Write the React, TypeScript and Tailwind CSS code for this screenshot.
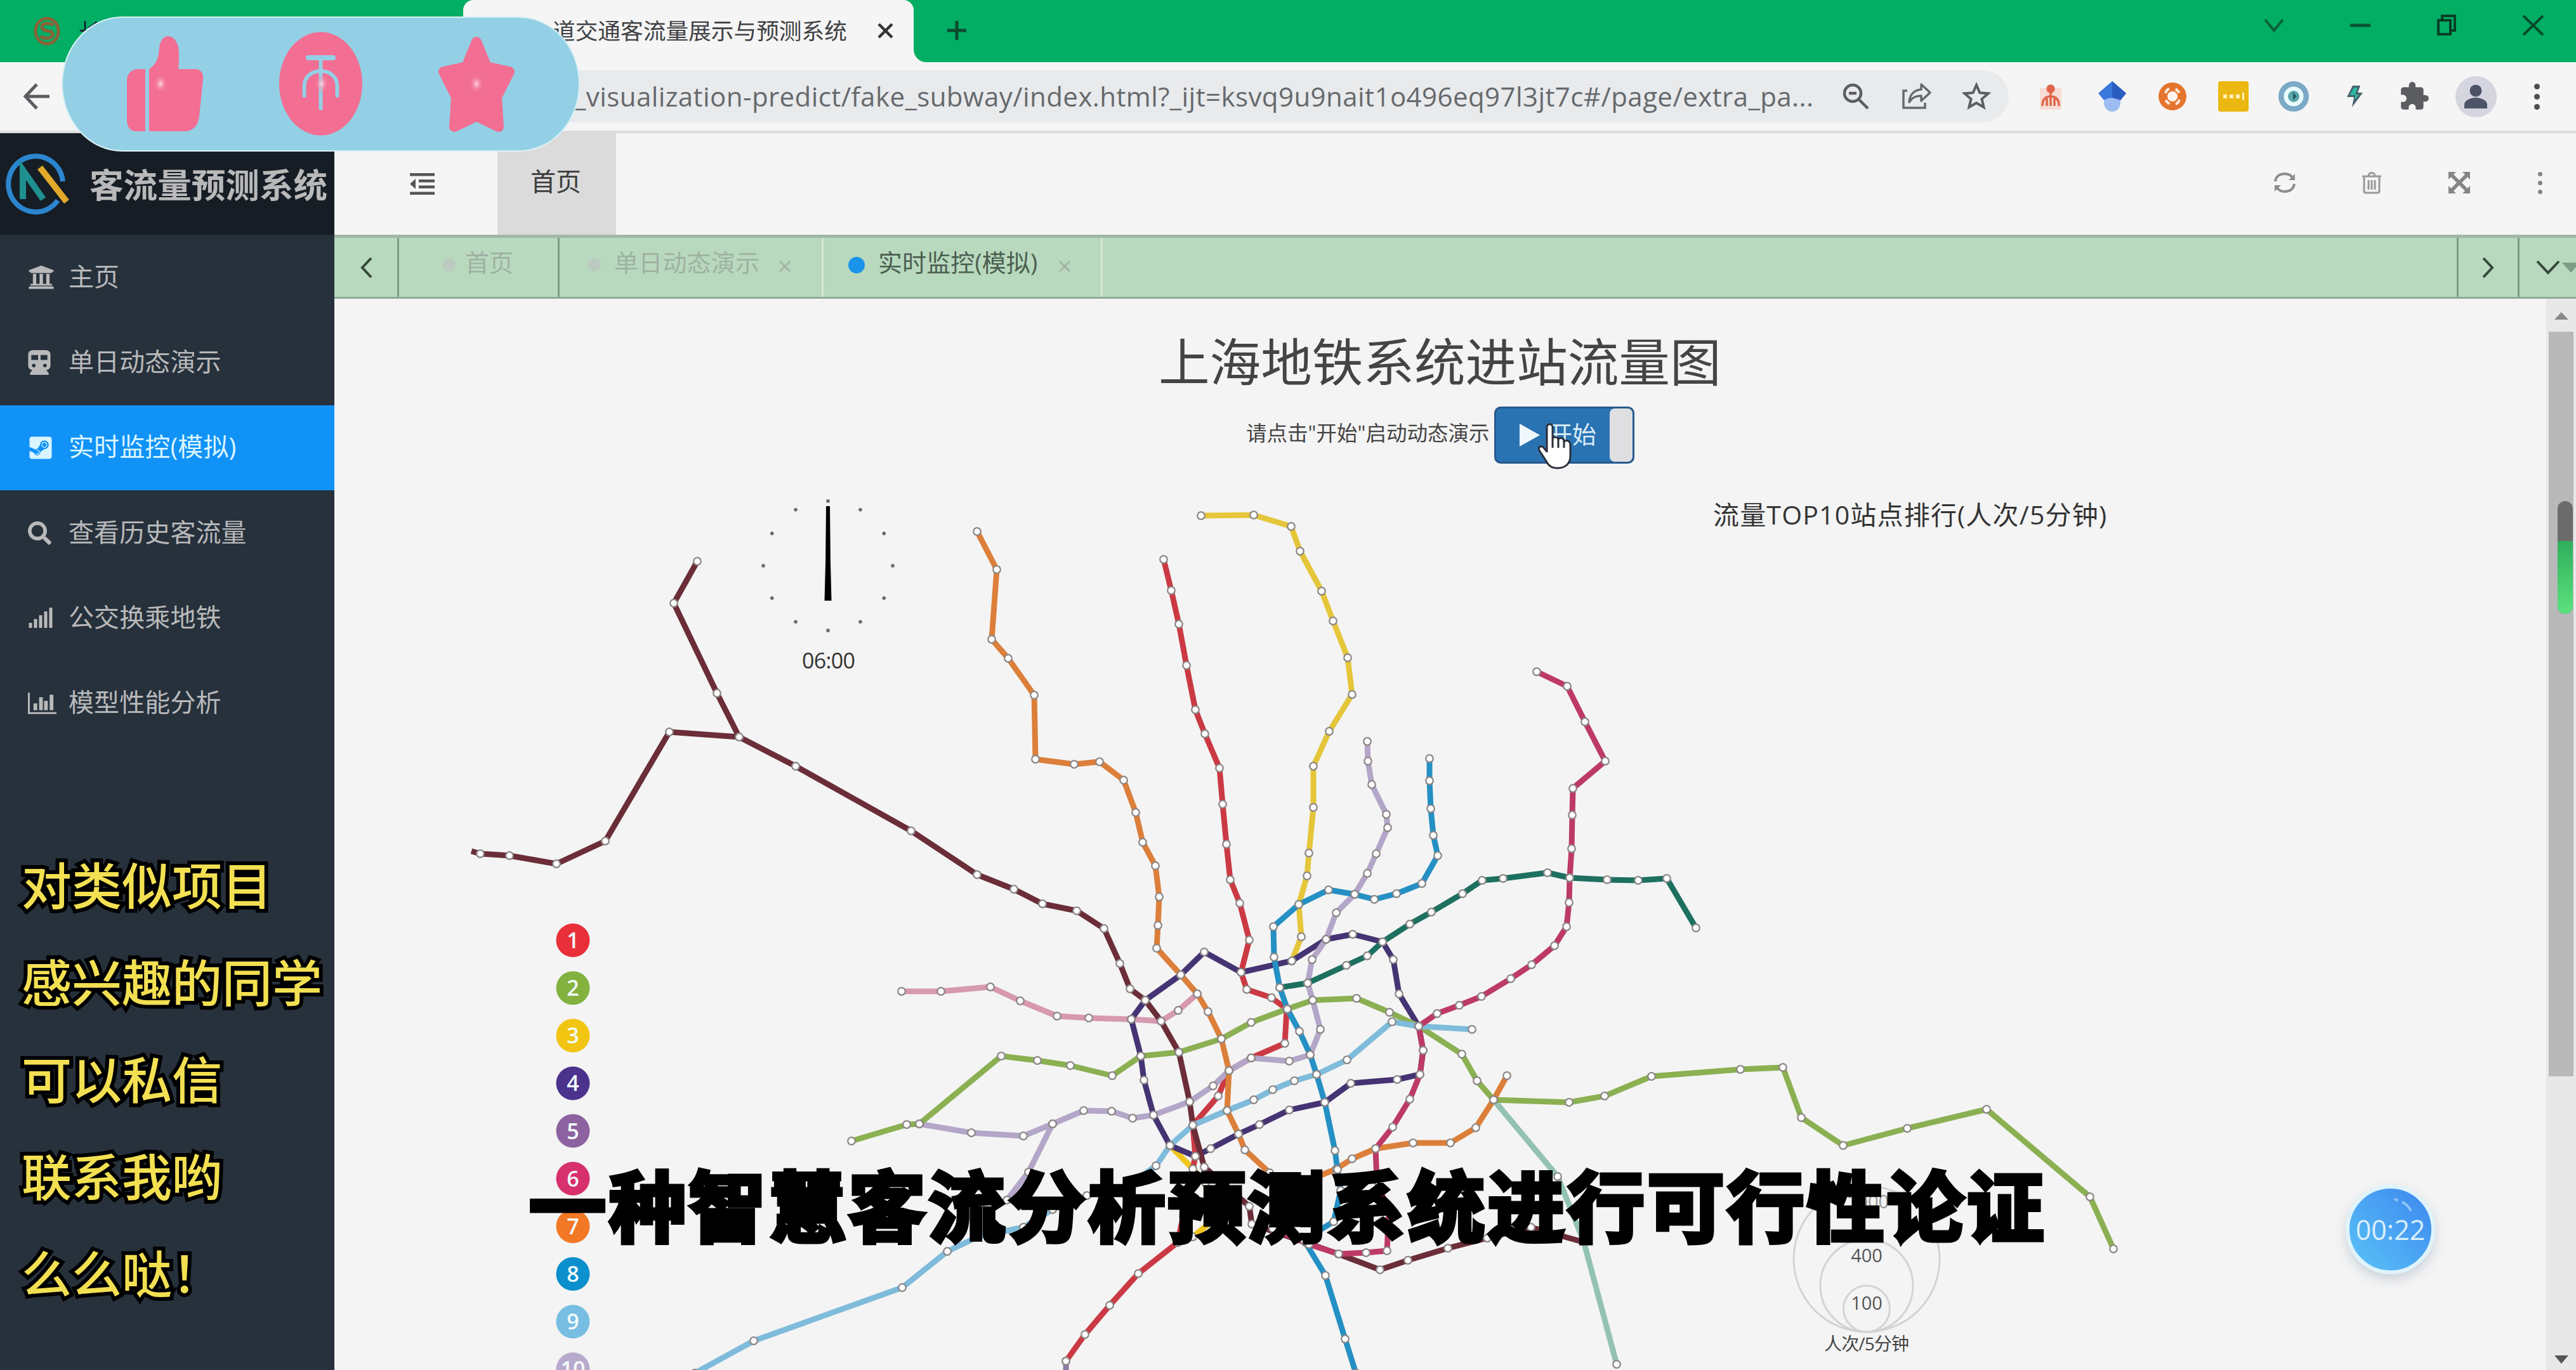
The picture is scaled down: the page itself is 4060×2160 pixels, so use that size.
import React from "react";
import { FaUniversity, FaSteamSquare, FaSearch, FaSignal } from "react-icons/fa";
import { MdExtension } from "react-icons/md";

type Line = { id: string; color: string; points: string; hideFirst?: boolean; hideLast?: boolean };

const LINES: Line[] = [
  {
    id: "16",
    color: "#93c2b3",
    points: "2354,1734 2455,1855 2496,1957 2548,2151",
  },
  {
    id: "5",
    color: "#8d7aa5",
    points: "1680,2146 1680,2175",
  },
  {
    id: "13",
    color: "#d799b0",
    points:
      "1421,1563 1483,1563 1561,1556 1608,1578 1666,1602 1716,1605 1783,1607 1830,1610 1857,1593 1887,1567",
  },
  {
    id: "3",
    color: "#e5c63a",
    points:
      "1893,813 1976,812 2035,830 2049,869 2083,932 2101,979 2124,1037 2131,1095 2095,1153 2070,1208 2070,1273 2063,1345 2060,1381 2047,1426 2051,1477 2036,1515",
  },
  {
    id: "3s",
    color: "#f0c51d",
    points: "1844,1806 1880,1843 1900,1865 1908,1927 1880,1950 1856,1959",
  },
  {
    id: "4",
    color: "#453473",
    points:
      "1805,1577 1861,1537 1898,1501 1956,1533 2036,1515 2090,1481 2132,1473 2179,1485 2196,1513 2205,1567 2236,1618 2243,1656 2238,1694 2202,1702 2129,1708 2088,1738 2032,1750 1985,1773 1952,1788 1908,1811 1884,1823 1844,1806 1818,1758 1803,1703 1798,1665 1783,1607 1805,1577",
  },
  {
    id: "1",
    color: "#cb3a44",
    points:
      "1834,882 1846,931 1858,984 1870,1049 1884,1119 1899,1157 1922,1211 1927,1268 1933,1331 1939,1387 1954,1424 1969,1482 1956,1533 1965,1560 2004,1573 2028,1591 2025,1645 1972,1668 1937,1688 1920,1728 1880,1774 1884,1823 1865,1917 1856,1959 1794,2008 1749,2058 1710,2104 1680,2146",
  },
  {
    id: "10",
    color: "#b3a6c8",
    points:
      "2155,1169 2156,1200 2162,1237 2185,1284 2187,1305 2169,1346 2155,1377 2135,1410 2106,1439 2090,1481 2068,1513 2061,1550 2069,1577 2081,1623 2065,1663 2032,1673 1972,1668 1937,1688 1912,1712 1875,1737 1818,1758 1785,1763 1752,1752 1708,1751 1659,1772 1613,1791 1531,1786 1449,1772",
  },
  {
    id: "10b",
    color: "#b3a6c8",
    points: "1659,1772 1621,1848 1587,1892",
  },
  {
    id: "2",
    color: "#8bb052",
    points:
      "1342,1799 1429,1773 1449,1772 1578,1665 1635,1672 1687,1680 1753,1696 1798,1665 1858,1659 1925,1638 1972,1612 2028,1591 2069,1577 2138,1574 2190,1596 2236,1618 2304,1662 2328,1704 2354,1734 2473,1738 2529,1728 2603,1697 2743,1686 2810,1683 2839,1762 2905,1806 3006,1779 3131,1749 3294,1887 3331,1969",
  },
  {
    id: "9",
    color: "#7fbbdb",
    points:
      "2320,1623 2236,1618 2194,1611 2123,1671 2075,1694 2040,1704 2006,1718 1976,1734 1934,1751 1880,1774 1844,1806 1822,1838 1776,1870 1713,1885 1659,1907 1613,1935 1541,1950 1493,1973 1422,2030 1188,2114 1095,2165",
  },
  {
    id: "11n",
    color: "#6b2d38",
    points: "1099,885 1062,951 1130,1093 1165,1162",
  },
  {
    id: "11",
    color: "#6b2d38",
    hideFirst: true,
    hideLast: true,
    points:
      "743,1342 757,1346 803,1349 877,1362 954,1326 1055,1154 1165,1162 1254,1208 1436,1310 1540,1379 1598,1402 1643,1425 1697,1436 1740,1464 1765,1519 1781,1559 1805,1577 1830,1610 1858,1659 1875,1737 1880,1774 1898,1840 1969,1902 1973,1930 2058,1959 2109,1977 2175,2002 2219,1987 2282,1968 2344,1952 2413,1935 2491,1957",
  },
  {
    id: "7",
    color: "#dc7f3a",
    points:
      "1540,838 1571,898 1563,1008 1589,1038 1630,1096 1632,1197 1693,1205 1733,1201 1771,1230 1790,1281 1801,1328 1821,1365 1827,1414 1825,1459 1823,1495 1861,1537 1887,1567 1904,1595 1925,1638 1937,1688 1934,1751 1952,1788 1962,1813 2001,1849 2040,1870 2106,1843 2131,1827 2168,1811 2227,1802 2286,1802 2326,1778 2354,1734 2375,1696",
  },
  {
    id: "12",
    color: "#1d7060",
    points:
      "2673,1463 2627,1385 2582,1388 2533,1387 2474,1384 2439,1376 2369,1385 2336,1388 2305,1409 2256,1438 2222,1457 2179,1485 2155,1507 2122,1522 2061,1550 2017,1557",
  },
  {
    id: "6",
    color: "#bd3a67",
    points:
      "2422,1059 2470,1082 2498,1138 2530,1200 2479,1243 2478,1285 2477,1338 2474,1384 2473,1423 2469,1461 2450,1491 2414,1521 2381,1543 2335,1571 2300,1585 2265,1598 2236,1618 2243,1656 2238,1694 2222,1733 2195,1777 2168,1811 2170,1862 2189,1912 2186,1972 2153,1975 2110,1977 2063,1962 2006,1937",
  },
  {
    id: "8",
    color: "#2590c4",
    points:
      "2253,1196 2253,1231 2255,1275 2259,1317 2266,1349 2241,1393 2201,1409 2166,1418 2135,1410 2094,1403 2047,1426 2007,1461 2008,1509 2017,1557 2029,1591 2048,1626 2065,1663 2075,1694 2088,1738 2104,1814 2108,1844 2113,1877 2102,1926 2055,1955 2089,2011 2120,2111 2137,2165",
  },
];

const BADGES = [
  "#e93039",
  "#83b23f",
  "#f2c512",
  "#4b328c",
  "#8d62a0",
  "#d6306d",
  "#f27825",
  "#0c8fcd",
  "#78bee2",
  "#b8aacd",
];

function SubwayMap() {
  return (
    <svg className="block h-[1420px] w-[3486px]" viewBox="527 740 3486 1420">
      {/* clock */}
      {Array.from({ length: 12 }, (_, i) => {
        const a = (i * Math.PI) / 6;
        return (
          <line
            key={i}
            x1={1305 + 99.5 * Math.sin(a)}
            y1={892 - 99.5 * Math.cos(a)}
            x2={1305 + 104.5 * Math.sin(a)}
            y2={892 - 104.5 * Math.cos(a)}
            stroke="#666"
            strokeWidth="5"
          />
        );
      })}
      <path d="M1302 798h6l1 94h-8z" fill="#000" />
      <path d="M1301 888h8l1.500 59h-11z" fill="#000" />
      <text x="1306" y="1054" textAnchor="middle" fontSize="34" fill="#333" textLength="84">
        06:00
      </text>

      <text x="2700" y="827" fontSize="41" fill="#333" textLength="620">
        流量TOP10站点排行(人次/5分钟)
      </text>

      {LINES.map((l) => (
        <polyline
          key={l.id}
          points={l.points}
          fill="none"
          stroke={l.color}
          strokeWidth="9"
          strokeLinejoin="round"
        />
      ))}
      {LINES.flatMap((l) => {
        const pts = l.points.split(" ");
        return pts
          .filter((_, i) => !(l.hideFirst && i === 0) && !(l.hideLast && i === pts.length - 1))
          .map((p) => {
            const [x, y] = p.split(",");
            return <circle key={l.id + p} cx={x} cy={y} r="5.800" fill="#fff" stroke="#8b8685" strokeWidth="2.200" />;
          });
      })}

      {/* line badges */}
      {BADGES.map((c, i) => (
        <g key={c}>
          <circle cx="903" cy={1482.5 + i * 75.15} r="26.500" fill={c} />
          <text
            x="903"
            y={1495 + i * 75.15}
            textAnchor="middle"
            fontSize="34"
            fontWeight="600"
            fill="#f4fbfb"
          >
            {i + 1}
          </text>
        </g>
      ))}

      {/* flow scale */}
      <g fill="none" stroke="#d3d3d3" strokeWidth="3">
        <circle cx="2942" cy="1985" r="115" />
        <circle cx="2942" cy="2027" r="73" />
        <circle cx="2942" cy="2063.500" r="36.500" />
      </g>
      <g fontSize="29" fill="#555" textAnchor="middle">
        <text x="2944" y="1905" fill="#999">1000</text>
        <text x="2942" y="1990">400</text>
        <text x="2942" y="2065">100</text>
        <text x="2942" y="2129" fontSize="28" fill="#444" textLength="134">人次/5分钟</text>
      </g>
    </svg>
  );
}

function BrowserTabs() {
  return (
    <div className="flex h-[98px] items-start bg-[#02ad64]">
      <div className="flex h-[98px] w-[730px] items-center pl-[52px]">
        <svg className="h-[48px] w-[44px]" viewBox="0 0 44 48" fill="none" stroke="#8a6236" strokeWidth="5">
          <ellipse cx="22" cy="24" rx="18" ry="20" />
          <path d="M32 15c-6-5-18-4-18 3 0 8 17 3 17 11 0 7-13 8-19 3" />
        </svg>
        <span className="ml-[28px] text-[35px] leading-none text-[#123]">长</span>
      </div>
      <div className="relative flex h-[98px] w-[710px] items-center rounded-t-[16px] bg-[#f5f5f5]">
        <span className="ml-[141px] text-[35.700px] leading-none whitespace-nowrap text-[#3f4144]">道交通客流量展示与预测系统</span>
        <svg className="absolute top-[35px] left-[652px] size-[27px]" viewBox="0 0 27 27" stroke="#333" strokeWidth="4.500">
          <path d="M3 3l21 21M24 3L3 24" />
        </svg>
        <svg className="absolute top-[78px] left-[710px] size-[20px]" viewBox="0 0 20 20" fill="#f5f5f5">
          <path d="M0 0v20h20A20 20 0 0 1 0 0z" />
        </svg>
      </div>
      <svg className="mt-[33px] ml-[53px] size-[30px]" viewBox="0 0 30 30" stroke="#0c4a2e" strokeWidth="5">
        <path d="M15 0v30M0 15h30" />
      </svg>
      <div className="mt-[22px] mr-[50px] ml-auto flex items-center gap-[104px]">
        <svg className="h-[36px] w-[32px]" viewBox="0 0 32 36" fill="none" stroke="#08603a" strokeWidth="4">
          <path d="M2 9l14 17L30 9" />
        </svg>
        <svg className="h-[36px] w-[32px]" viewBox="0 0 32 36" stroke="#07522f" strokeWidth="5">
          <path d="M0 18h32" />
        </svg>
        <svg className="h-[36px] w-[32px]" viewBox="0 0 32 36" fill="none" stroke="#063f25" strokeWidth="4">
          <path d="M3 10h19v22H3zM9 9V3h20v23h-6" />
        </svg>
        <svg className="h-[36px] w-[34px]" viewBox="0 0 34 36" stroke="#064a2b" strokeWidth="4">
          <path d="M1 3l31 30M32 3L1 33" />
        </svg>
      </div>
    </div>
  );
}

function Toolbar() {
  return (
    <div className="flex h-[112px] items-center border-b-[4px] border-[#dcdcdc] bg-[#f5f5f5]">
      <svg className="ml-[36px] h-[42px] w-[42px]" viewBox="0 0 42 42" fill="none" stroke="#5b5d60" strokeWidth="5">
        <path d="M42 21H4M22 2L4 21l18 19" />
      </svg>
      <div className="ml-[160px] flex h-[82px] w-[2928px] items-center rounded-full bg-[#e8eaec]">
        <span className="ml-[667px] w-[1953px] text-[42px] leading-none tracking-[0.430px] whitespace-nowrap text-[#66696c]">
          _visualization-predict/fake_subway/index.html?_ijt=ksvq9u9nait1o496eq97l3jt7c#/page/extra_pa...
        </span>
        <svg className="ml-[46px] size-[42px]" viewBox="0 0 42 42" fill="none" stroke="#5b5d60" strokeWidth="4.500">
          <circle cx="16" cy="16" r="13" />
          <path d="M26 26l14 14M10 16h12" />
        </svg>
        <svg className="ml-[51px] h-[44px] w-[48px]" viewBox="0 0 48 44" fill="none" stroke="#66696c" strokeWidth="3.500">
          <path d="M9 13H3v27h34v-8" />
          <path d="M31 3l14 13-14 13v-8c-8 0-14 2-19 10 1-12 8-19 19-20z" strokeLinejoin="round" />
        </svg>
        <svg className="ml-[47px] size-[46px]" viewBox="0 0 46 46" fill="none" stroke="#5b5d60" strokeWidth="4">
          <path d="M23 5l5.300 12.200 13.200 1.200-10 8.700 3 12.900L23 33.200 11.500 40l3-12.900-10-8.700 13.200-1.200z" />
        </svg>
      </div>
      <div className="ml-[46px] flex items-center">
        <svg className="h-[42px] w-[40px]" viewBox="0 0 40 42" fill="none" stroke="#e0654b" strokeWidth="3.500">
          <rect x="3" y="8" width="34" height="34" fill="#f6dcd5" stroke="none" />
          <circle cx="20" cy="9" r="5" fill="#e0654b" />
          <path d="M20 12v24M7 36c0-10 4-15 13-15s13 5 13 15M14 24v12M26 24v12" />
        </svg>
        <svg className="ml-[54px] h-[50px] w-[46px]" viewBox="0 0 46 50">
          <ellipse cx="23" cy="35" rx="13" ry="14" fill="#9dbdf2" />
          <path d="M23 1l22 19-9 11c-8-5-18-5-26 0L1 20z" fill="#3a78dd" />
          <path d="M23 1l22 19-9 11-13-4z" fill="#2b5cc0" />
        </svg>
        <svg className="ml-[49px] size-[46px]" viewBox="0 0 46 46">
          <circle cx="23" cy="23" r="22" fill="#e5752e" />
          <g stroke="#fbe9dc" strokeWidth="4" fill="none">
            <circle cx="23" cy="23" r="8" fill="#fff5ee" stroke="none" />
            <path d="M12 18c1-4 3-6 6-7M34 28c-1 4-3 6-6 7M28 11l6 6M12 29l6 6" />
          </g>
        </svg>
        <div className="ml-[49px] flex h-[48px] w-[48px] items-center justify-center gap-[4px] rounded-[4px] bg-[#ebb811]">
          <i className="size-[6px] bg-[#fdf3b8]" />
          <i className="size-[6px] bg-[#fdf3b8]" />
          <i className="size-[6px] bg-[#fdf3b8]" />
          <i className="h-[12px] w-[3px] bg-[#fdf3b8]" />
        </div>
        <svg className="ml-[47px] size-[48px]" viewBox="0 0 48 48">
          <circle cx="24" cy="24" r="24" fill="#7ba9c6" />
          <circle cx="24" cy="24" r="15.500" fill="#e9fbfb" />
          <circle cx="24" cy="24" r="9" fill="#5ca7ab" />
          <path d="M23 17l6 7-6 6z" fill="#2c5b64" />
        </svg>
        <svg className="ml-[58px] h-[36px] w-[28px]" viewBox="0 0 28 36">
          <path d="M11 1h12l-4 11h8L10 35l3-16H2z" fill="#46606a" />
          <path d="M13 4h6l-4 11h6l-7 9 1-8H6z" fill="#2db8a0" />
        </svg>
        <MdExtension className="ml-[55px] size-[50px] text-[#5b5d60]" />
        <svg className="ml-[40px] size-[65px]" viewBox="0 0 65 65">
          <circle cx="32.500" cy="32.500" r="32.500" fill="#d4d5de" />
          <circle cx="32" cy="23" r="9.500" fill="#4e5468" />
          <path d="M14 51v-6c0-8 12-11 18-11s18 3 18 11v6z" fill="#4e5468" />
        </svg>
        <div className="ml-[59px] flex flex-col gap-[7px]">
          <i className="size-[9px] rounded-full bg-[#4c4e50]" />
          <i className="size-[9px] rounded-full bg-[#4c4e50]" />
          <i className="size-[9px] rounded-full bg-[#4c4e50]" />
        </div>
      </div>
    </div>
  );
}

function BarChartIcon({ className }: { className?: string }) {
  return (
    <svg className={className} viewBox="0 0 46 36" fill="currentColor">
      <path d="M0 1h3v31h43v3H0z" />
      <path d="M9 18h6v11H9zM18 8h6v21h-6zM26 14h6v15h-6zM35 4h6v25h-6z" />
    </svg>
  );
}

function TrainIcon({ className }: { className?: string }) {
  return (
    <svg className={className} viewBox="0 0 36 40" fill="currentColor" fillRule="evenodd">
      <path d="M8 0h20c5 0 8 3 8 7v18c0 4-3 7-7 7l4 5v3H3v-3l4-5c-4 0-7-3-7-7V7c0-4 3-7 8-7zM5 8v8h11V8zM20 8v8h11V8zM9 22a3 3 0 1 0 .01 0zM27 22a3 3 0 1 0 .01 0z" />
    </svg>
  );
}

const MENU = [
  { label: "主页", icon: <FaUniversity className="size-[42px]" /> },
  { label: "单日动态演示", icon: <TrainIcon className="h-[39px] w-[36px]" /> },
  { label: "实时监控(模拟)", icon: <FaSteamSquare className="size-[40px]" />, active: true },
  { label: "查看历史客流量", icon: <FaSearch className="size-[37px]" /> },
  { label: "公交换乘地铁", icon: <FaSignal className="size-[40px]" /> },
  { label: "模型性能分析", icon: <BarChartIcon className="h-[36px] w-[45px]" /> },
];

function Sidebar() {
  return (
    <div className="flex w-[527px] flex-col bg-[#26313c]">
      <div className="flex h-[160px] items-center bg-[#161d25]">
        <svg className="ml-[8px] h-[100px] w-[104px]" viewBox="0 0 104 100" fill="none">
          <path d="M83 76A43 44 0 1 1 91 46" stroke="#2c86cf" strokeWidth="8" />
          <path d="M28 74V28l32 46" stroke="#1f8f8f" strokeWidth="10" />
          <path d="M55 24l42 54" stroke="#e2a92b" strokeWidth="10" />
        </svg>
        <span className="mt-[4px] ml-[29px] text-[53.600px] leading-none font-bold whitespace-nowrap text-[#b9b9ba]">
          客流量预测系统
        </span>
      </div>
      {MENU.map((m) => (
        <div
          key={m.label}
          className={
            m.active
              ? "flex h-[134.300px] items-center bg-[#1192f7] text-[#d9f5ff]"
              : "flex h-[134.300px] items-center text-[#b9b9ba]"
          }
        >
          <span className="ml-[44px] flex w-[64px]">{m.icon}</span>
          <span className="-mt-[3px] text-[40px] leading-none tracking-[0.100px] whitespace-nowrap">{m.label}</span>
        </div>
      ))}
      <div className="mt-[144px] ml-[34px] flex flex-col text-[79px] leading-[153px] font-medium whitespace-nowrap text-[#f3e052] [-webkit-text-stroke:12px_#000] [paint-order:stroke_fill]">
        <span>对类似项目</span>
        <span>感兴趣的同学</span>
        <span>可以私信</span>
        <span>联系我哟</span>
        <span>么么哒！</span>
      </div>
    </div>
  );
}

function AppHeader() {
  return (
    <div className="flex h-[160px] bg-[#f5f5f5] text-[#8c8c8c]">
      <svg className="mt-[63px] ml-[119px] h-[34px] w-[39px]" viewBox="0 0 39 34" fill="#555">
        <path d="M0 0h39v4.500H0zM14 10h25v4.500H14zM14 19.500h25V24H14zM0 29.500h39V34H0zM9 9v16L0 17z" />
      </svg>
      <div className="ml-[99px] flex h-[160px] w-[187px] justify-center bg-[#dbdbdb] pt-[56px] pr-[3px] text-[40px] leading-none text-[#3c3c3c]">
        首页
      </div>
      <div className="mt-[60px] mr-[53px] ml-auto flex h-[36px] items-center">
        <svg className="h-[34px] w-[36px]" viewBox="0 0 36 34" fill="none" stroke="#8c8c8c" strokeWidth="4">
          <path d="M3 15C4 7 10 3 18 3c6 0 10 2 13 7M33 19c-1 8-7 12-15 12-6 0-10-2-13-7" />
          <path d="M34 3v10H24zM2 31V21h10z" fill="#8c8c8c" stroke="none" />
        </svg>
        <svg className="ml-[103px] h-[36px] w-[32px]" viewBox="0 0 32 36" fill="none" stroke="#999" strokeWidth="3">
          <path d="M1 8h30M11 7c0-6 10-6 10 0M4 9v22c0 2 1 3 3 3h18c2 0 3-1 3-3V9M11 14v15M16 14v15M21 14v15" />
        </svg>
        <svg className="ml-[104px] h-[36px] w-[36px]" viewBox="0 0 36 36" fill="#858585">
          <path d="M1 1h12l-4 4 9 9 9-9-4-4h12v12l-4-4-9 9 9 9 4-4v12H23l4-4-9-9-9 9 4 4H1V23l4 4 9-9-9-9-4 4z" />
        </svg>
        <div className="ml-[106px] flex flex-col gap-[7px]">
          <i className="size-[7px] rounded-full bg-[#858585]" />
          <i className="size-[7px] rounded-full bg-[#858585]" />
          <i className="size-[7px] rounded-full bg-[#858585]" />
        </div>
      </div>
    </div>
  );
}

function PageTabs() {
  return (
    <div className="flex h-[101px] border-t-[5px] border-b-[3px] border-t-[#a0b8a6] border-b-[#8dab93] bg-[#b8d9be] text-[38px] leading-none whitespace-nowrap">
      <div className="flex w-[102px] items-center border-r-[3px] border-[#7d9b84]">
        <svg className="ml-[41px] h-[32px] w-[19px]" viewBox="0 0 19 32" fill="none" stroke="#37493c" strokeWidth="4">
          <path d="M17 1L3 16l14 15" />
        </svg>
      </div>
      <div className="flex w-[253px] border-r-[3px] border-[#7d9b84] pt-[19px] text-[#9eb2a2]">
        <i className="mt-[13px] ml-[68px] size-[21px] rounded-full bg-[#bccabf]" />
        <span className="ml-[15px]">首页</span>
      </div>
      <div className="flex w-[416px] border-r-[3px] border-[#d3e8d6] pt-[19px] text-[#9eb2a2]">
        <i className="mt-[13px] ml-[44px] size-[21px] rounded-full bg-[#bccabf]" />
        <span className="ml-[21px] tracking-[0.200px]">单日动态演示</span>
        <svg className="mt-[17px] ml-[31px] size-[18px]" viewBox="0 0 18 18" stroke="#a3b5a7" strokeWidth="3">
          <path d="M1 1l16 16M17 1L1 17" />
        </svg>
      </div>
      <div className="flex w-[440px] border-r-[3px] border-[#d3e8d6] pt-[19px] text-[#4c5f51]">
        <i className="mt-[11px] ml-[39px] size-[26px] rounded-full bg-[#1b93ea]" />
        <span className="ml-[21px] tracking-[0.100px]">实时监控(模拟)</span>
        <svg className="mt-[17px] ml-[34px] size-[18px]" viewBox="0 0 18 18" stroke="#a3b5a7" strokeWidth="3">
          <path d="M1 1l16 16M17 1L1 17" />
        </svg>
      </div>
      <div className="ml-auto flex w-[96px] items-center border-l-[3px] border-[#7d9b84]">
        <svg className="ml-[37px] h-[32px] w-[20px]" viewBox="0 0 20 32" fill="none" stroke="#37493c" strokeWidth="4">
          <path d="M2 1l14 15L2 31" />
        </svg>
      </div>
      <div className="flex w-[92px] items-center border-l-[3px] border-[#7d9b84]">
        <svg className="ml-[26px] h-[24px] w-[38px]" viewBox="0 0 38 24" fill="none" stroke="#37493c" strokeWidth="4">
          <path d="M2 2l17 18L36 2" />
        </svg>
        <svg className="ml-[3px] h-[16px] w-[22px]" viewBox="0 0 22 16" fill="#7f9c86">
          <path d="M0 0h28L14 16z" />
        </svg>
      </div>
    </div>
  );
}

function HandCursor({ className }: { className?: string }) {
  return (
    <svg className={className} viewBox="0 0 56 74" fill="#fff" stroke="#2a2f38" strokeWidth="3" strokeLinejoin="round">
      <path d="M15 46V8c0-7 9-7 9 0v18c1-4 8-4 9 1 2-4 9-3 9 3 3-3 10-1 10 5v18c0 12-8 19-20 19-9 0-14-3-18-11L3 44c-3-6 4-8 7-4z" />
      <path d="M24 26v14M33 28v12M42 30v10" />
    </svg>
  );
}

function Content() {
  return (
    <div className="flex h-[1689px] bg-[#f4f4f4]">
      <div className="flex w-[3486px] flex-col">
        <div className="flex h-[269px] flex-col">
          <h1 className="mt-[59px] ml-[1299px] text-[80.600px] leading-[80px] whitespace-nowrap text-[#444]">上海地铁系统进站流量图</h1>
          <div className="mt-[31px] ml-[1437px] flex items-center">
            <span className="-mt-[5px] w-[391px] text-[32.500px] leading-none whitespace-nowrap text-[#444]">
              请点击"开始"启动动态演示
            </span>
            <button className="relative flex h-[90px] w-[221px] items-center overflow-visible rounded-[10px] border-[3px] border-[#27598c] bg-[#2a73b3] text-[38px] leading-none whitespace-nowrap text-[#d9ecf8]">
              <svg className="ml-[37px] h-[36px] w-[32px]" viewBox="0 0 32 36" fill="#eef8fd">
                <path d="M0 0l32 18L0 36z" />
              </svg>
              <span className="-mt-[4px] ml-[13px]">开始</span>
              <i className="ml-auto h-[84px] w-[36px] rounded-[8px] bg-[#dfdfe1]" />
              <HandCursor className="absolute top-[22px] left-[65px] h-[74px] w-[56px]" />
            </button>
          </div>
        </div>
        <SubwayMap />
      </div>
      <div className="flex w-[47px] flex-col items-center bg-[#e8e8e8]">
        <svg className="mt-[21px] h-[12px] w-[22px]" viewBox="0 0 22 12" fill="#8a8a8a">
          <path d="M11 0l11 12H0z" />
        </svg>
        <div className="mt-[19px] h-[1174px] w-[39px] bg-[#b9b9b9]" />
        <svg className="mt-[440px] h-[13px] w-[22px]" viewBox="0 0 22 13" fill="#555">
          <path d="M0 0h22L11 13z" />
        </svg>
      </div>
    </div>
  );
}

function ReactionPill() {
  return (
    <div className="absolute top-[26px] left-[97px] h-[213px] w-[817px] overflow-hidden rounded-[96px/106px] border-[2px] border-[#d9f0f4] bg-[#93d0e5]">
      <svg className="-mt-[2px] -ml-[2px] block h-[213px] w-[817px]" viewBox="97 26 817 213">
        <defs>
          <radialGradient id="shine">
            <stop offset="0" stopColor="#fbd3df" />
            <stop offset="1" stopColor="#f36e93" stopOpacity="0" />
          </radialGradient>
        </defs>
        <g fill="#f36e93">
          <path d="M229 109h-11c-11 0-18 7-18 18v62c0 11 5 18 15 18h14z" />
          <path d="M235 207v-98c10-7 15-15 16-34 1-12 8-18 14-18 10 0 17 12 17 27 0 9 0 17-1 25h27c9 0 13 7 12 16l-6 58c-2 15-9 24-24 24z" />
          <ellipse cx="505.500" cy="132" rx="65.500" ry="81.500" />
          <path
            d="M751 66l16 39 36 8-20 40 3 47-35-17-35 17 3-47-20-40 36-8z"
            stroke="#f36e93"
            strokeWidth="16"
            strokeLinejoin="round"
          />
        </g>
        <g fill="none" stroke="#93d0e5" strokeLinecap="round">
          <path d="M486 91h39" strokeWidth="8" />
          <path d="M505.500 92v79" strokeWidth="6" />
          <path d="M479.500 151v-15c0-32 52-32 52 0v15" strokeWidth="6" />
        </g>
        <ellipse cx="253" cy="132" rx="11" ry="15" fill="url(#shine)" />
        <ellipse cx="507" cy="132" rx="11" ry="15" fill="url(#shine)" />
        <ellipse cx="751" cy="132" rx="11" ry="15" fill="url(#shine)" />
      </svg>
    </div>
  );
}

export default function App() {
  return (
    <div className="relative h-[2160px] w-[4060px] overflow-hidden bg-[#f4f4f4] font-['Open_Sans','Noto_Sans_CJK_SC',sans-serif]">
      <BrowserTabs />
      <Toolbar />
      <div className="flex h-[1950px]">
        <Sidebar />
        <div className="flex w-[3533px] flex-col">
          <AppHeader />
          <PageTabs />
          <Content />
        </div>
      </div>

      <ReactionPill />
      <div className="absolute top-[1839px] left-[834px] text-[121px] leading-[124px] font-bold tracking-[4.900px] whitespace-nowrap text-black [-webkit-text-stroke:7px_#000]">
        一种智慧客流分析预测系统进行可行性论证
      </div>
      <div className="absolute top-[1868px] left-[3697px] flex size-[141px] items-center justify-center rounded-full border-[6px] border-[#dff3fb] bg-linear-to-tr from-[#5cc3f7] to-[#3d86ee] text-[43px] leading-none text-[#d9effb] shadow-[0_8px_18px_rgba(80,110,150,0.25)]">
        <span>00:22</span>
        <svg className="absolute top-[12px] right-[26px] h-[28px] w-[34px]" viewBox="0 0 34 28" fill="none" stroke="#8cc4f8" strokeWidth="4">
          <path d="M2 4l5 3M14 9c6 3 11 8 14 14" />
        </svg>
      </div>
      <div className="absolute top-[790px] left-[4031px] flex h-[178px] w-[24px] flex-col overflow-hidden rounded-full bg-[#6b6b6b]">
        <div className="mt-auto h-[115px] bg-linear-to-b from-[#2fae5b] to-[#5be27f]" />
      </div>
    </div>
  );
}
